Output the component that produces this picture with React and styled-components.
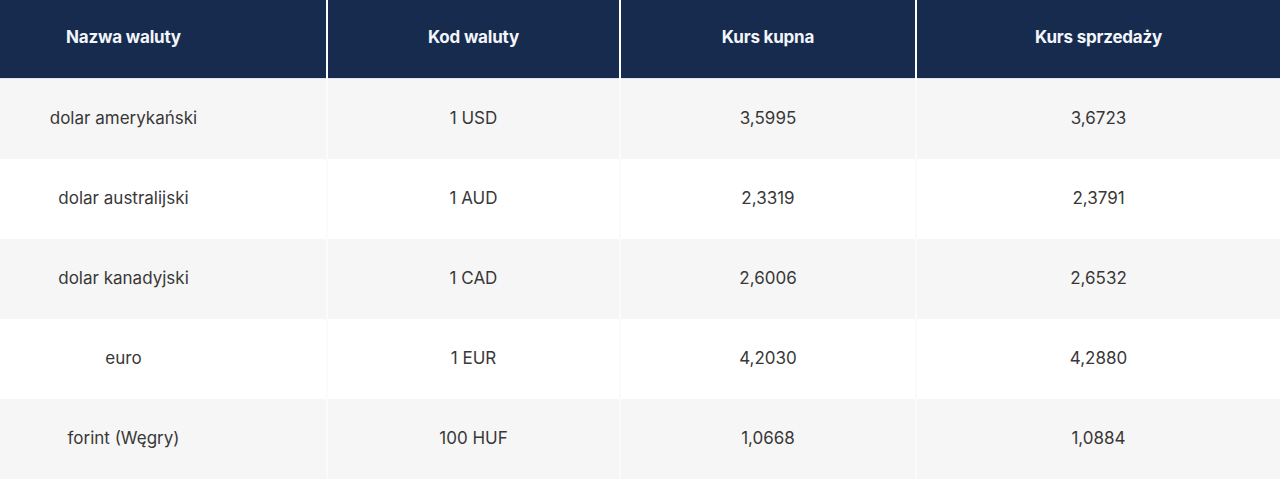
import React from "react"
import styled, {createGlobalStyle} from "styled-components"

const GlobalStyle = createGlobalStyle`
  html, body {
    margin: 0;
    padding: 0;
    background: #ffffff;
  }
  body {
    font-family: "Inter", "Liberation Sans", sans-serif;
  }
`

const rates = [
  {name: "dolar amerykański", code: "1 USD", buy: "3,5995", sell: "3,6723"},
  {name: "dolar australijski", code: "1 AUD", buy: "2,3319", sell: "2,3791"},
  {name: "dolar kanadyjski", code: "1 CAD", buy: "2,6006", sell: "2,6532"},
  {name: "euro", code: "1 EUR", buy: "4,2030", sell: "4,2880"},
  {name: "forint (Węgry)", code: "100 HUF", buy: "1,0668", sell: "1,0884"},
]

const Table = styled.table`
  width: 1280px;
  border-collapse: collapse;
  table-layout: fixed;
`

const HeadCell = styled.th`
  height: 74px;
  padding: 0 ${p => (p.$first ? "79px" : "0")} 4px 0;
  background: #172b4f;
  color: #f2f6fa;
  font-size: 17px;
  font-weight: 700;
  letter-spacing: -0.2px;
  text-align: center;
  border-left: ${p => (p.$first ? "none" : "2px solid #ffffff")};
  border-bottom: 1px solid #e2e4e8;
`

const Row = styled.tr`
  background: ${p => (p.$odd ? "#f6f6f6" : "#ffffff")};
`

const Cell = styled.td`
  height: 78px;
  padding: 0 ${p => (p.$first ? "79px" : "0")} 2px 0;
  color: #383838;
  font-size: 17px;
  font-weight: 400;
  text-align: center;
  border-left: ${p => (p.$first ? "none" : "2px solid #fbfbfb")};
`

export default function App() {
  return (
    <>
      <GlobalStyle />
      <Table>
        <colgroup>
          <col style={{width: 327}} />
          <col style={{width: 293}} />
          <col style={{width: 296}} />
          <col style={{width: 364}} />
        </colgroup>
        <thead>
          <tr>
            <HeadCell $first>Nazwa waluty</HeadCell>
            <HeadCell>Kod waluty</HeadCell>
            <HeadCell>Kurs kupna</HeadCell>
            <HeadCell>Kurs sprzedaży</HeadCell>
          </tr>
        </thead>
        <tbody>
          {rates.map((r, i) => (
            <Row key={r.code} $odd={i % 2 === 0}>
              <Cell $first>{r.name}</Cell>
              <Cell>{r.code}</Cell>
              <Cell>{r.buy}</Cell>
              <Cell>{r.sell}</Cell>
            </Row>
          ))}
        </tbody>
      </Table>
    </>
  )
}
